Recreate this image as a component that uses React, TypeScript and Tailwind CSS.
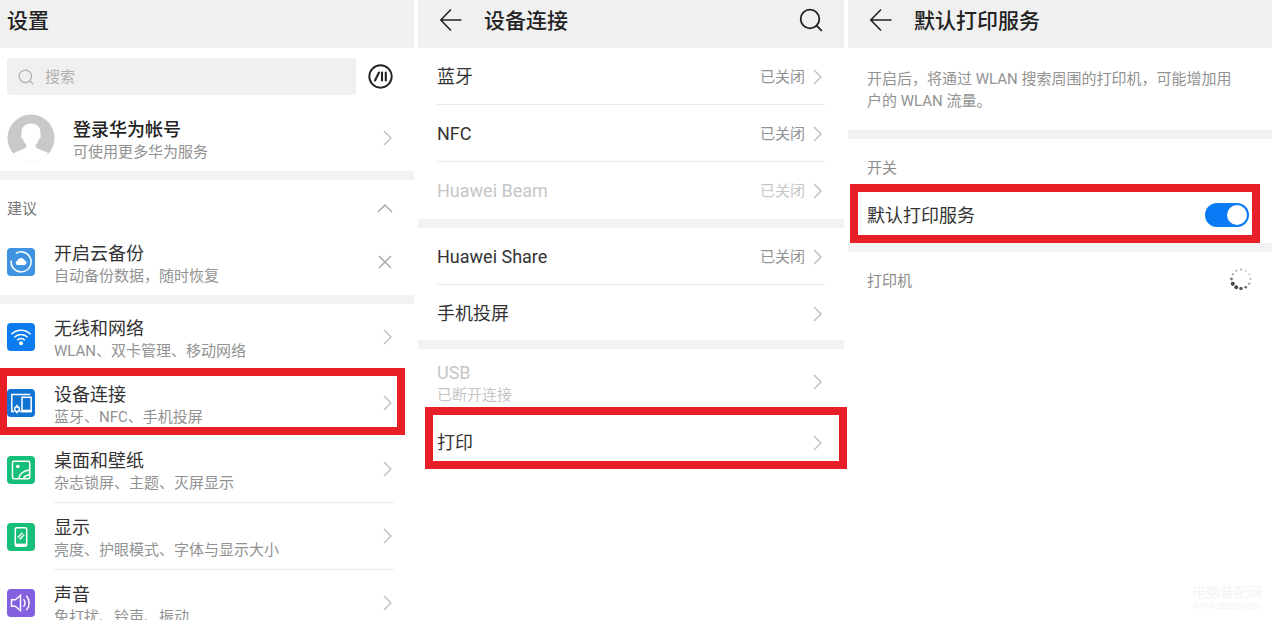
import type { ReactNode } from "react";

function Chevron() {
  return (
    <svg className="h-4 w-[9px] shrink-0" viewBox="0 0 9 16" fill="none" stroke="#c2c2c2" strokeWidth="1.5" aria-hidden="true">
      <path d="M1 1 L8 8 L1 15" />
    </svg>
  );
}

function BackArrow() {
  return (
    <svg className="h-6 w-6" viewBox="0 0 24 24" fill="none" stroke="#222" strokeWidth="1.6" aria-hidden="true">
      <path d="M13 1.5 2.800 12 13 22.500M2.800 12H23.500" />
    </svg>
  );
}

function SearchIcon({ className, width }: { className: string; width: number }) {
  return (
    <svg className={className} viewBox="0 0 24 24" fill="none" stroke="currentColor" strokeWidth={width} aria-hidden="true">
      <circle cx="11" cy="11" r="9.3" />
      <path d="m17.6 17.6 5.2 5.2" />
    </svg>
  );
}

function Tile({ className, children }: { className: string; children: ReactNode }) {
  return (
    <span className={`flex h-7 w-7 shrink-0 items-center justify-center rounded ${className}`}>
      <svg className="h-7 w-7" viewBox="0 0 28 28" fill="none" stroke="#fff" strokeWidth="1.5" aria-hidden="true">
        {children}
      </svg>
    </span>
  );
}

function Band() {
  return <div className="h-[9px] shrink-0 bg-[#f2f2f2]" />;
}

function Highlight({ className }: { className: string }) {
  return <span className={`pointer-events-none absolute border-8 border-[#e71f27] ${className}`} />;
}

function RowText({ title, detail }: { title: string; detail: string }) {
  return (
    <span className="flex min-w-0 flex-1 flex-col pt-1.5">
      <span className="text-lg leading-[22px] text-[#333]">{title}</span>
      <span className="text-[15px] leading-[22px] text-[#929292]">{detail}</span>
    </span>
  );
}

const wifiTile = (
  <Tile className="bg-[#0a7cf0]">
    <path d="M4.300 11.200a13.600 13.600 0 0 1 19.400 0M7.300 14.200a9.400 9.400 0 0 1 13.400 0M10.200 17.200a5.300 5.300 0 0 1 7.600 0" />
    <circle cx="14" cy="20.200" r="2" fill="#fff" stroke="none" />
  </Tile>
);

const deviceTile = (
  <Tile className="bg-[#1173d4]">
    <path d="M7 22.500H4.800V5.600h18.400" />
    <rect x="15" y="8.300" width="9.200" height="14.400" />
    <path d="M15 21.700h9.200" strokeWidth="2" />
    <circle cx="10" cy="20.200" r="2.400" />
    <path d="M10 15.800v2M10 22.600v2M12.500 22.600H14" />
  </Tile>
);

const wallpaperTile = (
  <Tile className="bg-[#16bf77]">
    <rect x="5.500" y="5.200" width="17.200" height="17.600" rx="1.500" />
    <circle cx="10.800" cy="10.500" r="1.800" fill="#fff" stroke="none" />
    <path d="M12 22.300c.5-4.800 3.500-7.300 10.500-8.300M16.500 22c1.200-1.900 3-2.800 6-3.200" />
  </Tile>
);

const displayTile = (
  <Tile className="bg-[#16bf77]">
    <rect x="8.300" y="4.800" width="11.400" height="18.400" rx="1.500" />
    <path d="M8.500 21.800h11" strokeWidth="2.400" />
    <path d="m10.800 14.500 4.700-4.700M12.500 16.500l4.700-4.700" />
  </Tile>
);

const soundTile = (
  <Tile className="bg-[#845fe0]">
    <path d="M4.500 10.800h3.800l5.200-4.500v15.400l-5.200-4.500H4.500z" />
    <path d="M16.500 10.200a5.500 5.500 0 0 1 0 7.600M19.300 6.800a10.500 10.500 0 0 1 0 14.400" />
  </Tile>
);

const settings = [
  { title: "无线和网络", detail: "WLAN、双卡管理、移动网络", icon: wifiTile },
  { title: "设备连接", detail: "蓝牙、NFC、手机投屏", icon: deviceTile, marked: true },
  { title: "桌面和壁纸", detail: "杂志锁屏、主题、灭屏显示", icon: wallpaperTile, line: true },
  { title: "显示", detail: "亮度、护眼模式、字体与显示大小", icon: displayTile, line: true },
  { title: "声音", detail: "免打扰、铃声、振动", icon: soundTile },
];

function SettingsPanel() {
  return (
    <section className="min-w-0">
      <header className="flex h-12 items-center bg-[#f0f0f0] px-[7px] pb-2">
        <h1 className="pt-1 text-[21px] font-medium text-[#222]">设置</h1>
      </header>
      <div className="flex items-center gap-3 pt-2.5 pr-[21px] pl-[7px]">
        <label className="flex h-[37px] min-w-0 flex-1 items-center gap-[11px] rounded bg-[#f0f0f0] px-[11px] text-[#b0b0b0]">
          <SearchIcon className="h-4 w-4 shrink-0" width={1.8} />
          <input
            aria-label="搜索"
            placeholder="搜索"
            className="min-w-0 flex-1 bg-transparent pt-0.5 text-[15px] outline-none placeholder:text-[#b0b0b0]"
          />
        </label>
        <button type="button" aria-label="语音" className="h-[25px] w-[25px]">
          <svg className="h-full w-full" viewBox="0 0 25 25" fill="none" stroke="#222" strokeLinecap="round" aria-hidden="true">
            <circle cx="12.500" cy="12.500" r="11.200" strokeWidth="1.900" />
            <path d="m7 16.500 4-8M14 8.500v8M17.800 8.500v8" strokeWidth="2.100" />
          </svg>
        </button>
      </div>
      <a href="#account" className="flex h-[76px] items-center pt-2.5 pr-[22px] pl-[7px]">
        <svg className="h-12 w-12 shrink-0" viewBox="0 0 48 48" aria-hidden="true">
          <circle cx="24" cy="24" r="23.500" fill="#c9c9c9" />
          <path
            d="M24 9.500c-6 0-9.500 3.800-9.500 9 0 1 .2 1.800.1 2.600-.8 1.400.2 3.500 1.500 4.200.7 2.400 1.900 4.200 3.100 5.300v2.900c-3.500 2.300-9.300 3.600-12.700 6a23 23 0 0 0 35 0c-3.400-2.400-9.200-3.700-12.700-6v-2.900c1.200-1.100 2.400-2.900 3.100-5.300 1.300-.7 2.300-2.800 1.500-4.200-.1-.8.1-1.600.1-2.600 0-5.200-3.500-9-9.500-9z"
            fill="#fff"
          />
        </svg>
        <span className="flex flex-1 flex-col pt-1.5 pl-[18px]">
          <span className="text-lg leading-[22px] font-medium text-[#222]">登录华为帐号</span>
          <span className="text-[15px] leading-[22px] text-[#929292]">可使用更多华为服务</span>
        </span>
        <Chevron />
      </a>
      <Band />
      <div className="flex h-12 items-center justify-between pt-2 pr-[21px] pl-[7px]">
        <h2 className="pt-0.5 text-[15px] text-[#777]">建议</h2>
        <button type="button" aria-label="收起">
          <svg className="h-[9px] w-4" viewBox="0 0 16 9" fill="none" stroke="#aaa" strokeWidth="1.500" aria-hidden="true">
            <path d="m1 8 7-7 7 7" />
          </svg>
        </button>
      </div>
      <div className="flex h-[67px] items-center gap-[19px] pr-[22px] pl-[7px]">
        <Tile className="bg-[#3f93e0]">
          <path d="M9 5.300a10 10 0 1 1-4.800 7.200M4 15.500a10 10 0 0 0 3 5.500" />
          <path d="M10.500 17a2.200 2.200 0 0 1-.2-4.300 3.900 3.900 0 0 1 7.200-.5 2.500 2.500 0 0 1 .4 4.800z" fill="#fff" stroke="none" />
        </Tile>
        <RowText title="开启云备份" detail="自动备份数据，随时恢复" />
        <button type="button" aria-label="关闭">
          <svg className="h-3.5 w-3.5" viewBox="0 0 14 14" fill="none" stroke="#aaa" strokeWidth="1.500" aria-hidden="true">
            <path d="m1 1 12 12M13 1 1 13" />
          </svg>
        </button>
      </div>
      <Band />
      <nav>
        {settings.map((row) => (
          <a key={row.title} href="#detail" className={`relative flex gap-[19px] pr-5 pl-[7px] ${row.line ? "h-[67px]" : "h-[66px]"}`}>
            {row.marked && <Highlight className="-top-0.5 right-[9px] bottom-px -left-px" />}
            <span className="relative flex items-center">{row.icon}</span>
            <span className={`flex min-w-0 flex-1 items-center pr-0.5 ${row.line ? "border-b border-[#ebebeb]" : ""}`}>
              <RowText title={row.title} detail={row.detail} />
              <Chevron />
            </span>
          </a>
        ))}
      </nav>
    </section>
  );
}

function DeviceRow({ title, status, disabled, line }: { title: string; status?: string; disabled?: boolean; line?: boolean }) {
  return (
    <a
      href="#device"
      className={`mx-[19px] flex h-[57px] items-center gap-2 border-b pt-0.5 pr-[3px] ${line ? "border-[#ebebeb]" : "border-transparent"}`}
    >
      <span className={`flex-1 text-lg ${disabled ? "text-[#c6c6c6]" : "text-[#333]"}`}>{title}</span>
      {status && <span className={`text-[15px] ${disabled ? "text-[#c6c6c6]" : "text-[#929292]"}`}>{status}</span>}
      <Chevron />
    </a>
  );
}

function DevicePanel() {
  return (
    <section className="min-w-0">
      <header className="flex h-12 items-center bg-[#f0f0f0] pr-[21px] pb-2 pl-5">
        <button type="button" aria-label="返回">
          <BackArrow />
        </button>
        <h1 className="flex-1 pt-1 pl-[22px] text-[21px] font-medium text-[#222]">设备连接</h1>
        <button type="button" aria-label="搜索" className="text-[#222]">
          <SearchIcon className="h-6 w-6" width={1.8} />
        </button>
      </header>
      <DeviceRow title="蓝牙" status="已关闭" line />
      <DeviceRow title="NFC" status="已关闭" line />
      <DeviceRow title="Huawei Beam" status="已关闭" disabled />
      <Band />
      <DeviceRow title="Huawei Share" status="已关闭" line />
      <div className="-mb-0.5">
        <DeviceRow title="手机投屏" />
      </div>
      <Band />
      <a href="#usb" className="mx-[19px] flex h-[65px] items-center pr-[3px]">
        <span className="flex flex-1 flex-col pt-1 text-[#c6c6c6]">
          <span className="text-lg leading-[22px]">USB</span>
          <span className="text-[15px] leading-[22px]">已断开连接</span>
        </span>
        <Chevron />
      </a>
      <div className="relative">
        <DeviceRow title="打印" />
        <Highlight className="-top-[7px] -right-[3px] bottom-0.5 left-[7px]" />
      </div>
    </section>
  );
}

const spinnerDots = Array.from({ length: 12 }, (_, i) => {
  const angle = (i * Math.PI) / 6;
  const sizes = [0.9, 0.8, 0.8, 0.9, 1.1, 1.3, 1.7, 1.9, 2, 1.4, 1, 0.9];
  const tones = ["#999", "#aaa", "#aaa", "#aaa", "#888", "#666", "#555", "#444", "#444", "#777", "#999", "#999"];
  return { cx: 11 + 9.5 * Math.sin(angle), cy: 11 - 9.5 * Math.cos(angle), r: sizes[i], fill: tones[i] };
});

function PrintPanel() {
  return (
    <section className="flex min-w-0 flex-col">
      <header className="flex h-12 shrink-0 items-center bg-[#f0f0f0] px-5 pb-2">
        <button type="button" aria-label="返回">
          <BackArrow />
        </button>
        <h1 className="pt-1 pl-[22px] text-[21px] font-medium text-[#222]">默认打印服务</h1>
      </header>
      <p className="pt-5 pr-9 pb-[18px] pl-[19px] text-[15px] leading-[22px] text-[#929292]">
        开启后，将通过 WLAN 搜索周围的打印机，可能增加用户的 WLAN 流量。
      </p>
      <Band />
      <h2 className="flex h-12 items-center pt-2.5 pl-[19px] text-[15px] text-[#8c8c8c]">开关</h2>
      <div className="relative">
        <label className="flex h-14 items-center justify-between pr-[23px] pl-[19px]">
          <span className="pt-0.5 text-lg text-[#333]">默认打印服务</span>
          <input
            type="checkbox"
            role="switch"
            defaultChecked
            className="flex h-6 w-11 appearance-none items-center rounded-full bg-[#ccc] px-0.5 before:block before:h-5 before:w-5 before:rounded-full before:bg-white checked:justify-end checked:bg-[#087bf5]"
          />
        </label>
        <Highlight className="-top-[3px] right-3 bottom-0 left-0.5" />
      </div>
      <Band />
      <div className="flex h-[54px] items-center justify-between pr-5 pl-[19px]">
        <h2 className="pt-1 text-[15px] text-[#8c8c8c]">打印机</h2>
        <svg className="h-[22px] w-[22px]" viewBox="0 0 22 22" role="img" aria-label="正在搜索">
          {spinnerDots.map((dot, i) => (
            <circle key={i} cx={dot.cx} cy={dot.cy} r={dot.r} fill={dot.fill} />
          ))}
        </svg>
      </div>
      <footer className="mt-auto self-end pr-2.5 pb-2 text-center text-[#f3f3f3]">
        <p className="text-sm leading-4">电脑装配网</p>
        <p className="text-[10px] leading-3">www.dnzp.com</p>
      </footer>
    </section>
  );
}

export default function App() {
  return (
    <main className="grid h-screen grid-cols-[414fr_426fr_424fr] grid-rows-[minmax(0,1fr)] gap-1 overflow-hidden bg-white font-[Roboto,'Noto_Sans_CJK_SC',sans-serif]">
      <SettingsPanel />
      <DevicePanel />
      <PrintPanel />
    </main>
  );
}
